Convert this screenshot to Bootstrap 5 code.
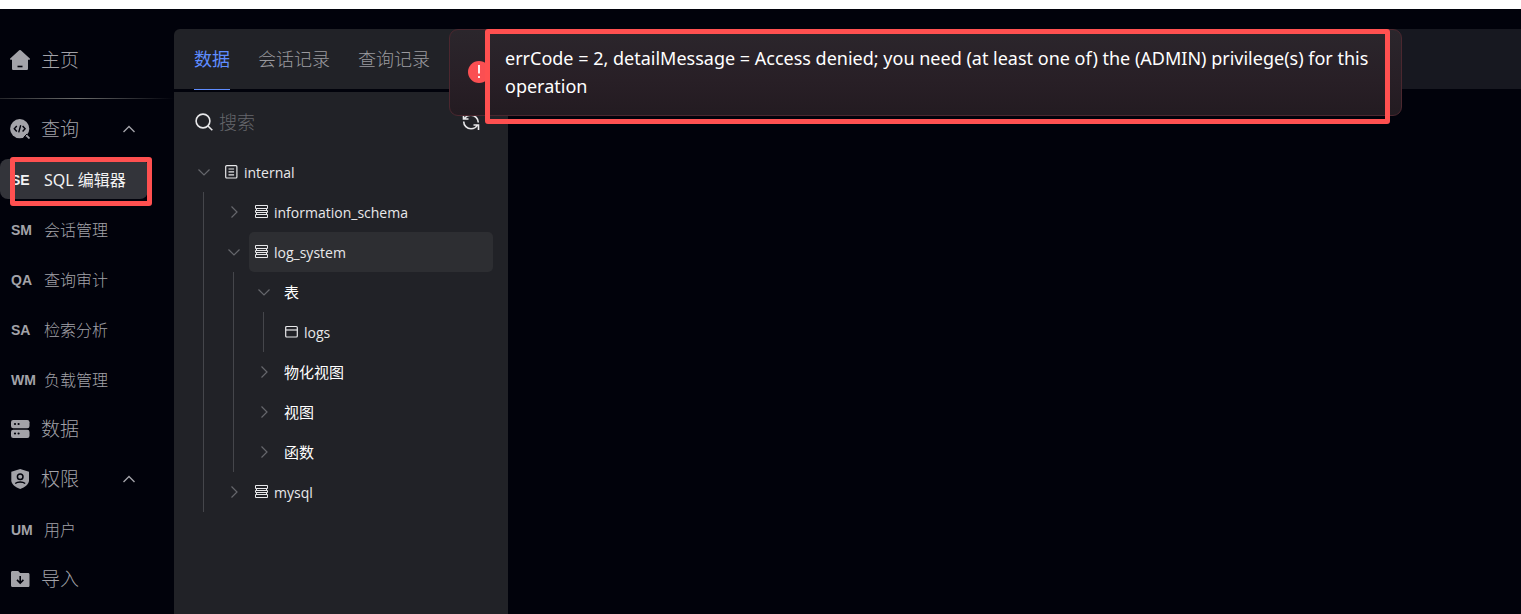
<!DOCTYPE html>
<html lang="zh-CN">
<head>
<meta charset="utf-8">
<meta name="viewport" content="width=device-width, initial-scale=1">
<title>SQL 编辑器</title>
<link href="https://cdn.jsdelivr.net/npm/bootstrap@5.3.0/dist/css/bootstrap.min.css" rel="stylesheet">
<style>
  body { background: #01020b; color: #e8e8ea; font-family: "Open Sans", "Noto Sans CJK SC", sans-serif; }
  button { background: none; border: 0; padding: 0; color: inherit; }
  svg { display: block; flex: none; }
  .top-strip { height: 9px; background: #fff; }
  .app-shell { min-height: calc(100vh - 9px); }

  .side-menu { width: 174px; padding-top: 26px; color: #a3a3a9; font-weight: 300; }
  .side-menu a { color: inherit; text-decoration: none; }
  .side-menu .nav-row { height: 50px; padding-left: 10px; font-size: 19px; gap: 11px; }
  .side-menu .nav-row .arrow { margin-right: 38px; }
  .side-menu .sub-row { height: 40px; margin: 5px 26px 5px 0; padding: 2px 0 0 11px; font-size: 16px; border-radius: 8px; }
  .side-menu .abbr { width: 33px; font: bold 14px "Liberation Sans", sans-serif; }
  .side-menu .sub-row.active { background: #33343a; color: #f2f2f3; font-family: "Noto Sans", "Noto Sans CJK SC", sans-serif; font-weight: 400; }
  .side-rule { height: 1px; margin: 13px 0 5px; background: linear-gradient(90deg, #26272b, #6c6d6c 45%, #01020b); }

  .tree-col { width: 334px; }
  .tab-bar { height: 60px; background: #212227; border-radius: 6px 0 0 0; padding-left: 20px; gap: 28px; margin-bottom: 3px; }
  .tab-bar button { height: 61px; font-size: 18px; font-weight: 300; color: #9a9a9f; border-bottom: 1px solid transparent; }
  .tab-bar button.active { color: #5f8dff; border-color: #5f8dff; font-weight: 400; }
  .tree-panel { background: #212227; }
  .search-row { height: 60px; padding: 0 28px 0 20px; gap: 5px; }
  .search-row input { background: none; border: 0; outline: 0; padding: 0; font-size: 18px; font-weight: 300; color: #e8e8ea; }
  .search-row input::placeholder { color: #66676c; opacity: 1; }

  .tree, .tree ul { list-style: none; margin: 0; padding: 0; }
  .tree ul { margin-left: 29px; border-left: 1px solid #45464b; }
  .tree-row { height: 40px; padding: 0 15px 0 20px; gap: 5px; }
  .tree-row.leaf { padding-left: 15px; }
  .tree-row .toggle { width: 20px; height: 40px; color: #66676c; }
  .tree-row .node { height: 40px; padding: 0 5px; gap: 6px; font-size: 14px; font-weight: 500; border-radius: 5px; }
  .tree-row .node svg { margin-left: 1px; }
  .tree-row .node.group-node { font-size: 15px; font-weight: 400; color: #fff; }
  .tree-row .node.selected { background: #2d2e32; }

  .work-bar { height: 60px; background: #171820; }

  .error-toast { left: 449px; right: 119px; top: 29px; padding: 14px 24px 15px 18px; gap: 15px; border: 1px solid #4b272f; border-radius: 9px;
    background: linear-gradient(180deg, #2b262c, #281f26 60%, #231b21); color: #fff; font-family: "Noto Sans", sans-serif; font-size: 18px; line-height: 28px; }
  .highlight-box { border: 5px solid #ff5050; border-radius: 3px; pointer-events: none; }
  .error-toast .highlight-box { left: 35px; right: 11px; top: -1px; bottom: -9px; }
  .sub-row .highlight-box { left: 10px; right: -4px; top: -2px; bottom: -7px; }
</style>
</head>
<body>
<svg width="0" height="0" class="position-absolute" aria-hidden="true">
  <symbol id="i-up" viewBox="0 0 14 14"><path d="M1.500 10 7 4.500 12.500 10" fill="none" stroke="currentColor" stroke-width="1.400"/></symbol>
  <symbol id="i-down" viewBox="0 0 14 14"><path d="M1.500 4.500 7 10l5.500-5.500" fill="none" stroke="currentColor" stroke-width="1.200"/></symbol>
  <symbol id="i-right" viewBox="0 0 14 14"><path d="M4.500 1.500 10 7l-5.500 5.500" fill="none" stroke="currentColor" stroke-width="1.200"/></symbol>
  <symbol id="i-db" viewBox="0 0 13 14"><path d="M.5.500h12v3H.5zM.5 5.500h12v2H.5zM.5 9.500h12v3H.5zM1.500 3.500v2M11.500 3.500v2M1.500 7.500v2M11.500 7.500v2" fill="none" stroke="currentColor" stroke-width="1"/></symbol>
</svg>

<div class="top-strip"></div>
<div class="app-shell d-flex">
  <nav class="side-menu d-flex flex-column flex-shrink-0" aria-label="主菜单">
    <a href="#" class="nav-row d-flex align-items-center">
      <svg width="20" height="22" viewBox="0 0 20 22"><path d="M9.200 1.300a1.200 1.200 0 0 1 1.600 0l9 8.200c.5.500.2 1.300-.4 1.300H18v8.700c0 1-.6 1.500-1.500 1.500h-13C2.600 21 2 20.500 2 19.500v-8.700H.6c-.6 0-.9-.8-.4-1.300z" fill="currentColor"/><path d="M7.500 17.500h5" stroke="#01020b" stroke-width="1.600"/></svg>
      主页
    </a>
    <div class="side-rule"></div>
    <a href="#" class="nav-row d-flex align-items-center">
      <svg width="20" height="20" viewBox="0 0 20 20"><circle cx="9.700" cy="9.700" r="9.600" fill="currentColor"/><path d="m15 15 4.500 4.500" stroke="currentColor" stroke-width="1.800"/><path d="m13.500 18.500 3.500-3.500" stroke="#01020b" stroke-width="1"/><path d="M6.800 7 4.300 9.800l2.500 2.700M12.600 7l2.500 2.800-2.500 2.700M10.700 6.200l-2 7.200" fill="none" stroke="#01020b" stroke-width="1.400"/></svg>
      查询
      <svg class="arrow ms-auto" width="14" height="14"><use href="#i-up"/></svg>
    </a>
    <a href="#" class="sub-row active position-relative d-flex align-items-center" aria-current="page"><span class="abbr">SE</span>SQL 编辑器<span class="highlight-box position-absolute"></span></a>
    <a href="#" class="sub-row d-flex align-items-center"><span class="abbr">SM</span>会话管理</a>
    <a href="#" class="sub-row d-flex align-items-center"><span class="abbr">QA</span>查询审计</a>
    <a href="#" class="sub-row d-flex align-items-center"><span class="abbr">SA</span>检索分析</a>
    <a href="#" class="sub-row d-flex align-items-center"><span class="abbr">WM</span>负载管理</a>
    <a href="#" class="nav-row d-flex align-items-center">
      <svg width="20" height="20" viewBox="0 0 20 20"><rect x="1" y="1" width="18.500" height="8.200" rx="2.200" fill="currentColor"/><rect x="1" y="10.800" width="18.500" height="8.200" rx="2.200" fill="currentColor"/><g fill="#01020b"><circle cx="5" cy="5" r="1.100"/><circle cx="8.600" cy="5" r="1.100"/><circle cx="5" cy="14.500" r="1.100"/><circle cx="8.600" cy="14.500" r="1.100"/></g></svg>
      数据
    </a>
    <a href="#" class="nav-row d-flex align-items-center">
      <svg width="20" height="20" viewBox="0 0 20 20"><path d="M10.200 0 19 2.800v8.400c0 4-4 7-8.800 8.800C5.300 18.200 1.300 15.200 1.300 11.200V2.800z" fill="currentColor"/><circle cx="10.200" cy="7.700" r="2.800" fill="none" stroke="#01020b" stroke-width="1.500"/><path d="M5.200 14.500c2.600-1.900 7.400-1.900 10 0" fill="none" stroke="#01020b" stroke-width="1.500"/></svg>
      权限
      <svg class="arrow ms-auto" width="14" height="14"><use href="#i-up"/></svg>
    </a>
    <a href="#" class="sub-row d-flex align-items-center"><span class="abbr">UM</span>用户</a>
    <a href="#" class="nav-row d-flex align-items-center">
      <svg width="20" height="20" viewBox="0 0 20 20"><path d="M2.500 2h5.700l2 2h7.800c1 0 1.500.6 1.500 1.500v11c0 1-.6 1.500-1.500 1.500H2.500c-1 0-1.500-.6-1.500-1.500v-13C1 2.600 1.600 2 2.500 2z" fill="currentColor"/><path d="M10.200 7v7M7 10.900l3.200 3.200 3.200-3.200" fill="none" stroke="#01020b" stroke-width="1.600"/></svg>
      导入
    </a>
  </nav>

  <main class="d-flex flex-grow-1 pt-3 mt-1">
    <section class="tree-col d-flex flex-column flex-shrink-0">
      <div class="tab-bar d-flex flex-shrink-0" role="tablist">
        <button type="button" role="tab" aria-selected="true" class="active">数据</button>
        <button type="button" role="tab" aria-selected="false">会话记录</button>
        <button type="button" role="tab" aria-selected="false">查询记录</button>
      </div>
      <div class="tree-panel flex-grow-1">
        <div class="search-row d-flex align-items-center">
          <svg width="20" height="20" viewBox="0 0 20 20" fill="none" stroke="currentColor" stroke-width="1.600"><circle cx="9" cy="9" r="6.900"/><path d="m14 14 4.300 4.300"/></svg>
          <input type="search" class="flex-grow-1" placeholder="搜索" aria-label="搜索">
          <button type="button" aria-label="刷新"><svg width="18" height="18" viewBox="0 0 18 18" fill="none" stroke="currentColor" stroke-width="1.600"><path d="M1.500 1v5h5M1.700 8.500c0 4 3.300 7.300 7.300 7.300 3 0 5.500-1.800 6.700-4.300M16.500 17v-5h-5M16.300 9.500c0-4-3.300-7.300-7.300-7.300-3 0-5.500 1.300-6.700 3.800"/></svg></button>
        </div>
        <ul class="tree">
          <li>
            <div class="tree-row d-flex">
              <button class="toggle d-flex align-items-center justify-content-center" aria-label="收起"><svg width="14" height="14"><use href="#i-down"/></svg></button>
              <button class="node d-flex align-items-center flex-grow-1"><svg width="13" height="14" viewBox="0 0 13 14" fill="none" stroke="currentColor" stroke-width="1.200"><rect x=".7" y=".7" width="11.200" height="12.300" rx="1"/><path d="M3.500 4h5.600M3.500 6.900h5.600M3.500 9.800h5.600"/></svg>internal</button>
            </div>
            <ul>
              <li>
                <div class="tree-row d-flex">
                  <button class="toggle d-flex align-items-center justify-content-center" aria-label="展开"><svg width="14" height="14"><use href="#i-right"/></svg></button>
                  <button class="node d-flex align-items-center flex-grow-1"><svg width="13" height="14"><use href="#i-db"/></svg>information_schema</button>
                </div>
              </li>
              <li>
                <div class="tree-row d-flex">
                  <button class="toggle d-flex align-items-center justify-content-center" aria-label="收起"><svg width="14" height="14"><use href="#i-down"/></svg></button>
                  <button class="node selected d-flex align-items-center flex-grow-1"><svg width="13" height="14"><use href="#i-db"/></svg>log_system</button>
                </div>
                <ul>
                  <li>
                    <div class="tree-row d-flex">
                      <button class="toggle d-flex align-items-center justify-content-center" aria-label="收起"><svg width="14" height="14"><use href="#i-down"/></svg></button>
                      <button class="node group-node d-flex align-items-center flex-grow-1">表</button>
                    </div>
                    <ul>
                      <li>
                        <div class="tree-row leaf d-flex">
                          <button class="node d-flex align-items-center flex-grow-1"><svg width="13" height="14" viewBox="0 0 13 14" fill="none" stroke="currentColor" stroke-width="1.200"><rect x=".7" y="1.500" width="11.600" height="10.500" rx="1"/><path d="M.7 5h11.600"/></svg>logs</button>
                        </div>
                      </li>
                    </ul>
                  </li>
                  <li>
                    <div class="tree-row d-flex">
                      <button class="toggle d-flex align-items-center justify-content-center" aria-label="展开"><svg width="14" height="14"><use href="#i-right"/></svg></button>
                      <button class="node group-node d-flex align-items-center flex-grow-1">物化视图</button>
                    </div>
                  </li>
                  <li>
                    <div class="tree-row d-flex">
                      <button class="toggle d-flex align-items-center justify-content-center" aria-label="展开"><svg width="14" height="14"><use href="#i-right"/></svg></button>
                      <button class="node group-node d-flex align-items-center flex-grow-1">视图</button>
                    </div>
                  </li>
                  <li>
                    <div class="tree-row d-flex">
                      <button class="toggle d-flex align-items-center justify-content-center" aria-label="展开"><svg width="14" height="14"><use href="#i-right"/></svg></button>
                      <button class="node group-node d-flex align-items-center flex-grow-1">函数</button>
                    </div>
                  </li>
                </ul>
              </li>
              <li>
                <div class="tree-row d-flex">
                  <button class="toggle d-flex align-items-center justify-content-center" aria-label="展开"><svg width="14" height="14"><use href="#i-right"/></svg></button>
                  <button class="node d-flex align-items-center flex-grow-1"><svg width="13" height="14"><use href="#i-db"/></svg>mysql</button>
                </div>
              </li>
            </ul>
          </li>
        </ul>
      </div>
    </section>
    <section class="flex-grow-1">
      <div class="work-bar"></div>
    </section>
  </main>
</div>

<div class="error-toast position-absolute d-flex align-items-center" role="alert">
  <svg width="22" height="22" viewBox="0 0 22 22"><circle cx="11" cy="11" r="11" fill="#fa4f52"/><path d="M11 4v8.500M11 15v2" stroke="#fff" stroke-width="1.800"/></svg>
  <span>errCode = 2, detailMessage = Access denied; you need (at least one of) the (ADMIN) privilege(s) for this operation</span>
  <span class="highlight-box position-absolute"></span>
</div>
<script src="https://cdn.jsdelivr.net/npm/bootstrap@5.3.0/dist/js/bootstrap.bundle.min.js"></script>
</body>
</html>
